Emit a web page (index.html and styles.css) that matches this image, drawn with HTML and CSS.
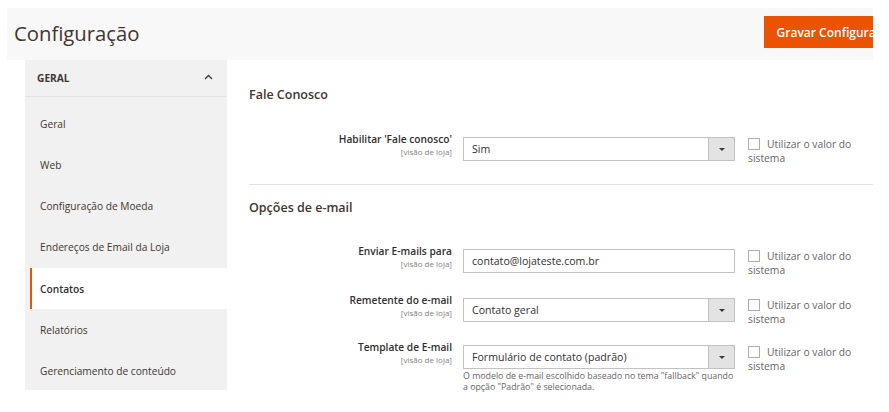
FILE: index.html
```html
<!DOCTYPE html>
<html lang="pt-BR">
<head>
<meta charset="utf-8">
<title>Configuração</title>
<link rel="stylesheet" href="styles.css">
</head>
<body>
<div class="page">
  <header class="page-header">
    <h1 class="page-title">Configuração</h1>
    <button class="btn-primary" type="button">Gravar Configuração</button>
  </header>
  <div class="page-body">
    <nav class="sidebar">
      <div class="sidebar-head">
        <span>Geral</span>
        <svg class="chevron" width="9" height="6" viewBox="0 0 9 6"><path d="M1 5 L4.5 1.5 L8 5" fill="none" stroke="#41362f" stroke-width="1.3"/></svg>
      </div>
      <ul class="sidebar-list">
        <li class="sidebar-item">Geral</li>
        <li class="sidebar-item">Web</li>
        <li class="sidebar-item">Configuração de Moeda</li>
        <li class="sidebar-item">Endereços de Email da Loja</li>
        <li class="sidebar-item is-active">Contatos</li>
        <li class="sidebar-item">Relatórios</li>
        <li class="sidebar-item">Gerenciamento de conteúdo</li>
      </ul>
    </nav>
    <main class="content">
      <section class="section section-first">
        <h2 class="section-title">Fale Conosco</h2>
        <div class="row">
          <div class="label"><span class="label-text">Habilitar 'Fale conosco'</span><span class="scope">[visão de loja]</span></div>
          <div class="control">
            <div class="select"><span class="select-value">Sim</span><span class="select-arrow"></span></div>
          </div>
          <label class="use-default"><span class="checkbox"></span>Utilizar o valor do sistema</label>
        </div>
      </section>
      <section class="section section-second">
        <h2 class="section-title">Opções de e-mail</h2>
        <div class="row">
          <div class="label"><span class="label-text">Enviar E-mails para</span><span class="scope">[visão de loja]</span></div>
          <div class="control">
            <div class="input">contato@lojateste.com.br</div>
          </div>
          <label class="use-default"><span class="checkbox"></span>Utilizar o valor do sistema</label>
        </div>
        <div class="row">
          <div class="label"><span class="label-text">Remetente do e-mail</span><span class="scope">[visão de loja]</span></div>
          <div class="control">
            <div class="select"><span class="select-value">Contato geral</span><span class="select-arrow"></span></div>
          </div>
          <label class="use-default"><span class="checkbox"></span>Utilizar o valor do sistema</label>
        </div>
        <div class="row">
          <div class="label"><span class="label-text">Template de E-mail</span><span class="scope">[visão de loja]</span></div>
          <div class="control">
            <div class="select"><span class="select-value">Formulário de contato (padrão)</span><span class="select-arrow"></span></div>
            <p class="note">O modelo de e-mail escolhido baseado no tema "fallback" quando a opção "Padrão" é selecionada.</p>
          </div>
          <label class="use-default"><span class="checkbox"></span>Utilizar o valor do sistema</label>
        </div>
      </section>
    </main>
  </div>
</div>
</body>
</html>
```

FILE: styles.css
```css
* { box-sizing: border-box; }
html, body { margin: 0; padding: 0; background: #fff; }
body {
  font-family: "Open Sans", "Liberation Sans", sans-serif;
  color: #303030;
  padding: 8px 16px 0 7px;
}
.page {
  width: 866px;
  height: 404px;
  overflow: hidden;
}
.page-header {
  display: flex;
  align-items: center;
  height: 52px;
  background: #f8f8f8;
  padding-left: 7px;
}
.page-title {
  margin: 0;
  font-size: 20.3px;
  font-weight: 400;
  color: #41362f;
  margin-top: -2px;
}
.btn-primary {
  margin-left: auto;
  margin-right: -36px;
  flex-shrink: 0;
  height: 32px;
  padding: 0 13px;
  border: 0;
  background: #eb5202;
  color: #fff;
  font-family: "Open Sans", "Liberation Sans", sans-serif;
  font-size: 12px;
  font-weight: 600;
  white-space: nowrap;
  margin-top: -4px;
}
.page-body {
  display: flex;
  align-items: flex-start;
}
.sidebar {
  width: 202px;
  margin-left: 18px;
  background: #f1f1f1;
  height: 330px;
  flex-shrink: 0;
}
.sidebar-head {
  display: flex;
  align-items: center;
  justify-content: space-between;
  height: 37px;
  padding: 0 14px 0 12px;
  border-bottom: 1px solid #e3e3e3;
  font-size: 10.2px;
  font-weight: 700;
  text-transform: uppercase;
  color: #41362f;
}
.chevron { margin-top: -2px; }
.sidebar-list {
  list-style: none;
  margin: 0;
  padding: 6px 0 0;
}
.sidebar-item {
  height: 41.25px;
  display: flex;
  align-items: center;
  padding-left: 15px;
  font-size: 10.2px;
  color: #41362f;
}
.sidebar-item.is-active {
  margin-left: 5px;
  padding-left: 8px;
  border-left: 2px solid #eb5202;
  background: #fff;
  font-weight: 600;
  color: #303030;
}
.content {
  flex: 1;
  padding-left: 22px;
}
.section-first {
  padding-top: 27px;
  padding-bottom: 19px;
  border-bottom: 1px solid #e3e3e3;
}
.section-second { padding-top: 15px; }
.section-title {
  margin: 0 0 34px;
  height: 16px;
  line-height: 16px;
  font-size: 12.5px;
  font-weight: 600;
  color: #41362f;
}
.section-second .section-title { margin-bottom: 33px; }
.row {
  display: flex;
  align-items: flex-start;
  min-height: 28px;
}
.section-second .row:nth-of-type(1) { margin-bottom: 21px; }
.section-second .row:nth-of-type(2) { margin-bottom: 19px; }
.label {
  width: 203px;
  margin-right: 11px;
  margin-top: -4px;
  display: flex;
  flex-direction: column;
  align-items: flex-end;
  text-align: right;
}
.label-text {
  font-size: 10.2px;
  line-height: 13px;
  font-weight: 600;
  color: #303030;
}
.scope {
  font-size: 8px;
  line-height: 12px;
  color: #808080;
}
.control { width: 272px; }
.input, .select {
  height: 24px;
  border: 1px solid #c2c2c2;
  background: #fff;
  font-size: 10.6px;
  color: #303030;
  display: flex;
  align-items: center;
}
.input { padding-left: 8px; }
.select-value { flex: 1; padding-left: 8px; }
.select-arrow {
  width: 26px;
  height: 100%;
  background: #e3e3e3;
  border-left: 1px solid #c2c2c2;
  position: relative;
}
.select-arrow::after {
  content: "";
  position: absolute;
  left: 50%;
  top: 50%;
  margin: -1.5px 0 0 -3px;
  border-left: 3px solid transparent;
  border-right: 3px solid transparent;
  border-top: 3.5px solid #41362f;
}
.note {
  margin: 2px 0 0;
  font-size: 8.8px;
  line-height: 10.5px;
  color: #666;
}
.use-default {
  width: 112px;
  margin-left: 13px;
  font-size: 10.3px;
  line-height: 14px;
  color: #666;
}
.checkbox {
  display: inline-block;
  width: 12px;
  height: 12px;
  border: 1px solid #adadad;
  background: #fff;
  vertical-align: -2px;
  margin-right: 7px;
}
```
